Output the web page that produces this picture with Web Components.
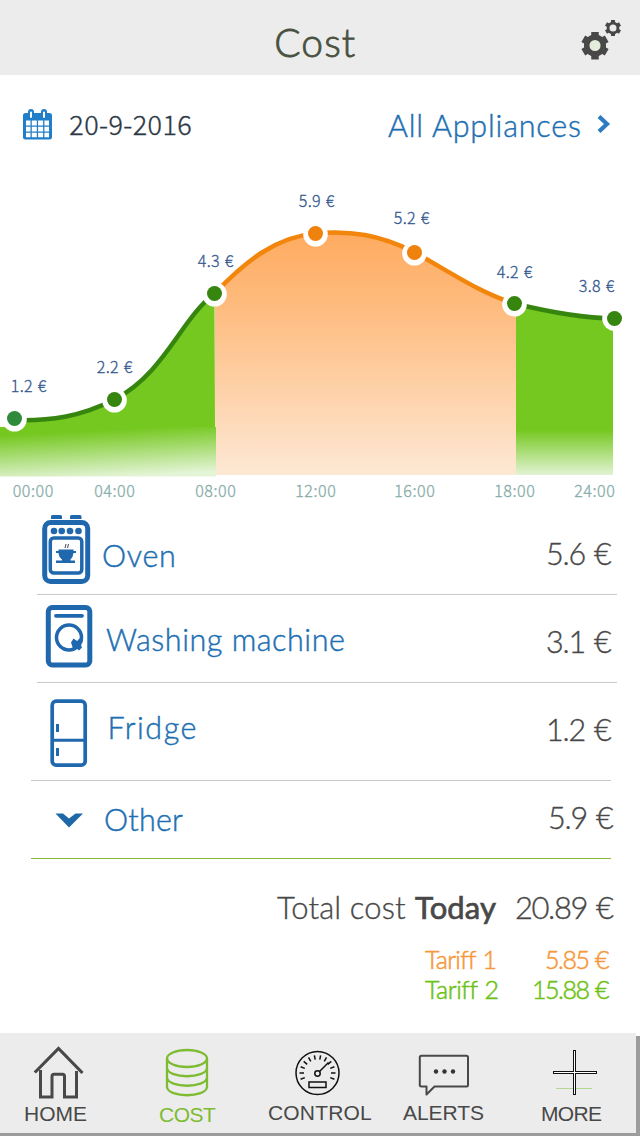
<!DOCTYPE html>
<html lang="en">
<head>
<meta charset="utf-8">
<title>Cost</title>
<style>
  html, body { margin: 0; padding: 0; background: #fff; }
  body { width: 640px; height: 1136px; overflow: hidden; font-family: Lato, "Liberation Sans", sans-serif; }
</style>
</head>
<body>
<cost-screen></cost-screen>
<script>
const ctx = document.createElement('canvas').getContext('2d');

class BaseEl extends HTMLElement {
  connectedCallback() {
    if (!this.shadowRoot) {
      this.attachShadow({ mode: 'open' }).innerHTML = this.view();
    }
  }
}

/* One line of text whose letters are tracked to fill the width "w"; "gap" widens the word space. */
class FitText extends HTMLElement {
  connectedCallback() {
    if (this.shadowRoot) return;
    const w = +this.getAttribute('w');
    const gap = +(this.getAttribute('gap') || 0);
    this.attachShadow({ mode: 'open' }).innerHTML =
      `<style>:host{display:block;width:${w}px;white-space:nowrap;line-height:1.2}
      span{display:block;word-spacing:${gap}px}</style><span><slot></slot></span>`;
    const cs = getComputedStyle(this);
    const text = this.textContent;
    ctx.font = `${cs.fontWeight} ${cs.fontSize} ${cs.fontFamily}`;
    const m = ctx.measureText(text);
    const ink = m.actualBoundingBoxLeft + m.actualBoundingBoxRight + gap * (text.split(' ').length - 1);
    const span = this.shadowRoot.querySelector('span');
    span.style.letterSpacing = ((w - ink) / (text.length - 1)).toFixed(3) + 'px';
    span.style.marginLeft = m.actualBoundingBoxLeft.toFixed(2) + 'px';
  }
}
customElements.define('fit-text', FitText);

class TopBar extends BaseEl {
  view() { return `
    <style>
      :host{display:grid;grid-template-columns:276.300px 1fr 60px;height:75px;box-sizing:border-box;
        background:#ececec;align-items:center}
      fit-text{font-size:39px;font-weight:300;-webkit-text-stroke:.8px;color:#485040;margin-top:9px}
      svg{display:block}
    </style>
    <i></i><fit-text w="78.500">${this.getAttribute('label')}</fit-text>
    <svg width="60" height="75" viewBox="580 0 60 75" stroke="#484848" fill="none">
      <g stroke-width="7.5"><path d="M595 32v27.500M583.3 38.7l23.4 13.6M583.3 52.3l23.4-13.6"/></g>
      <circle cx="595" cy="45.5" r="8.3" stroke-width="5.5" fill="#e4ecdb"/>
      <g stroke-width="4"><path d="M613 20v16M606 24l14 8M606 32l14-8"/></g>
      <circle cx="613" cy="28" r="4.9" stroke-width="2.8" fill="#ececec"/>
    </svg>`; }
}
customElements.define('top-bar', TopBar);

class FilterBar extends BaseEl {
  view() { return `
    <style>
      :host{display:grid;grid-template-columns:23px 47.300px 317.700px 208px 1fr;height:98px;align-items:center}
      svg{display:block}
      .date{font:300 27px "Noto Sans CJK SC","Noto Sans",sans-serif;line-height:40px;color:#2c3846;-webkit-text-stroke:.35px}
      .all{font-size:30.5px;font-weight:300;-webkit-text-stroke:.45px;color:#1d6fb3;margin-top:3px}
    </style>
    <i></i>
    <svg width="30" height="32" viewBox="0 -1 30 32">
      <path fill="#217ec9" d="M2.5 4H5V3a2.6 2.6 0 0 1 6 0v1h7V3a2.6 2.6 0 0 1 6 0v1h2.500a2.500 2.500 0 0 1 2.500 2.500V28a2.500 2.500 0 0 1-2.500 2.500h-24A2.500 2.500 0 0 1 0 28V6.500A2.500 2.500 0 0 1 2.500 4z"/>
      <path stroke="#fff" stroke-width="2" stroke-linecap="round" d="M8 3.500V8M21 3.500V8"/>
      <path fill="#fff" d="M3 11.500h4.500v5H3zM8.800 11.500h5v5h-5zM15.100 11.500h5v5h-5zM21.400 11.500H26v5h-4.600zM3 17.700h4.500v4.800H3zM8.800 17.700h5v4.800h-5zM15.100 17.700h5v4.800h-5zM21.400 17.700H26v4.800h-4.600zM3 23.700h4.500v4.500H3zM8.800 23.700h5v4.500h-5zM15.100 23.700h5v4.500h-5zM21.400 23.700H26v4.500h-4.600z"/>
    </svg>
    <fit-text class="date" w="121">20-9-2016</fit-text>
    <fit-text class="all" w="193">All Appliances</fit-text>
    <svg width="16" height="18" viewBox="0 0 16 18"><path d="M3 1.500l8 7.500-8 7.500" fill="none" stroke="#2b7cc2" stroke-width="4.200"/></svg>`; }
}
customElements.define('filter-bar', FilterBar);

class CostChart extends BaseEl {
  view() {
    const pts = [[14.5,418.5,'#2f8a3c'],[114.5,399.5,'#35850f'],[214.5,293.5,'#35850f'],[315.5,233.5,'#ee820c'],
      [414.5,252.5,'#ee820c'],[514.5,303.5,'#35850f'],[614.5,318.5,'#35850f']];
    const vals = [[28.5,392,'1.2 €'],[114.5,373,'2.2 €'],[215.500,267,'4.3 €'],[316.5,207,'5.9 €'],[411.5,224,'5.2 €'],[514.5,278,'4.2 €'],[596.5,292,'3.8 €']];
    const hrs = [[33,'00:00'],[114.5,'04:00'],[215.5,'08:00'],[315.5,'12:00'],[414.5,'16:00'],[514.5,'18:00'],[594.5,'24:00']];
    const c1 = 'C50 421 80 417 114.500 399.500C165 373 180 320 214.500 293.500';
    const c2 = 'C245 262 275 237 315 233.500C350 230 380 235 414 252C450 272 480 293 514.500 303.500';
    const c3 = 'C545 311 580 318 614 318.500';
    return `
    <style>
      :host{display:block;height:332px}
      svg{display:block}
      text{font-family:"Noto Sans CJK SC","Noto Sans",sans-serif;font-weight:300;text-anchor:middle;stroke-width:.3px}
      .v{font-size:16px;fill:#34588f;stroke:#34588f;word-spacing:1px}
      .h{font-size:16px;fill:#86aca8;stroke:#86aca8}
    </style>
    <svg width="640" height="332" viewBox="0 173 640 332">
      <defs>
        <linearGradient id="o" x1="0" y1="233" x2="0" y2="475" gradientUnits="userSpaceOnUse"><stop offset="0" stop-color="#ffab60"/><stop offset=".3" stop-color="#febb7e"/><stop offset="1" stop-color="#fde8d4"/></linearGradient>
        <linearGradient id="l" x1="108" y1="430" x2="110.500" y2="477" gradientUnits="userSpaceOnUse"><stop offset="0" stop-color="#75c820"/><stop offset="1" stop-color="#e4f4d6"/></linearGradient>
        <linearGradient id="r" x1="0" y1="430" x2="0" y2="475" gradientUnits="userSpaceOnUse"><stop offset="0" stop-color="#75c820"/><stop offset="1" stop-color="#e2f3d3"/></linearGradient>
      </defs>
      <path fill="#75c820" d="M14 420${c1}L215 428H14z"/>
      <path fill="url(#l)" d="M0 427H216V476.500H0z"/>
      <path fill="url(#o)" d="M215 293.500${c2}L516 304V475H216V427H215z"/>
      <path fill="url(#r)" d="M516 304${c3.replace('614 318.500', '613 318.500')}V475H516z"/>
      <g fill="none" stroke-width="4.500">
        <path stroke="#35850f" d="M14 420${c1}"/>
        <path stroke="#f2850b" d="M214.500 293.500${c2}"/>
        <path stroke="#35850f" d="M514.500 303.500${c3}"/>
      </g>
      ${pts.map(([x,y,c], i) => `<circle cx="${x}" cy="${y + (i === 6 ? 0 : .8)}" r="12.300" fill="#fff"/><circle cx="${x}" cy="${y}" r="7.500" fill="${c}"/>`).join('')}
      ${vals.map(([x,y,t]) => `<text class="v" x="${x}" y="${y}" textLength="35.500">${t}</text>`).join('')}
      ${hrs.map(([x,t]) => `<text class="h" x="${x}" y="497" textLength="40.500">${t}</text>`).join('')}
    </svg>`;
  }
}
customElements.define('cost-chart', CostChart);

/* Appliance row: slots for the icon, the name and the price; offsets come from attributes. */
class ApplianceRow extends BaseEl {
  view() {
    const a = n => this.getAttribute(n);
    return `
    <style>
      :host{display:grid;grid-template-columns:${a('label-x')}px ${a('price-x') - a('label-x')}px 1fr;grid-template-rows:100%;
        height:${a('h')}px;box-sizing:border-box;align-items:start;
        background:linear-gradient(${a('rule')},${a('rule')}) ${a('rule-x')}px 100%/580px 1.500px no-repeat}
      ::slotted(svg){display:block}
      ::slotted([slot=name]){font-size:30.500px;color:#1d6fb3;font-weight:300;-webkit-text-stroke:.45px;margin-top:${a('label-y')}px}
      ::slotted([slot=price]){font-size:30.500px;color:#484848;font-weight:300;-webkit-text-stroke:.35px;margin-top:${a('price-y')}px}
    </style>
    <slot name="icon"></slot><slot name="name"></slot><slot name="price"></slot>`;
  }
}
customElements.define('appliance-row', ApplianceRow);

class CostTotals extends BaseEl {
  view() { return `
    <style>
      :host{display:block;height:174px;box-sizing:border-box;padding-top:29.500px}
      div{display:grid}
      .t{grid-template-columns:277px 138px 101px 1fr;font-size:31px;color:#484848;height:55.500px;font-weight:300;-webkit-text-stroke:.35px}
      .t .b{font-weight:400;-webkit-text-stroke:.7px}
      .a{grid-template-columns:425px 121px 1fr;color:#f6983b;font-size:25px;height:30.400px;font-weight:300;-webkit-text-stroke:.55px}
      .b2{grid-template-columns:425px 109px 1fr;color:#6dc215}
    </style>
    <div class="t"><i></i><fit-text w="129">Total cost</fit-text><fit-text class="b" w="81">Today</fit-text><fit-text w="98" gap="2">20.89 €</fit-text></div>
    <div class="a"><i></i><fit-text w="70" gap="1">Tariff 1</fit-text><fit-text w="64" gap="1">5.85 €</fit-text></div>
    <div class="a b2"><i></i><fit-text w="72" gap="1">Tariff 2</fit-text><fit-text w="76" gap="1">15.88 €</fit-text></div>`; }
}
customElements.define('cost-totals', CostTotals);

class NavItem extends BaseEl {
  view() { return `
    <style>
      :host{display:grid;grid-template-rows:70px 1fr;justify-items:center;color:#484848;
        font-family:"Liberation Sans",Arial,sans-serif;font-size:21px}
      :host([active]){color:#7dbb31}
      fit-text{margin-top:${this.getAttribute('dy')}px;line-height:24px}
      ::slotted(svg){display:block}
    </style>
    <slot></slot><fit-text w="${this.getAttribute('w')}">${this.getAttribute('label')}</fit-text>`; }
}
customElements.define('nav-item', NavItem);

class TabBar extends BaseEl {
  view() {
    let ticks = '';
    for (let d = -200; d <= 20; d += 20) {
      const r = d * Math.PI / 180, c = Math.cos(r), s = Math.sin(r);
      ticks += `M${(317.5 + 13.5*c).toFixed(1)} ${(1073 + 13.5*s).toFixed(1)}L${(317.5 + 18*c).toFixed(1)} ${(1073 + 18*s).toFixed(1)}`;
    }
    return `
    <style>
      :host{display:grid;grid-template-columns:112px 152px 112px 135px 122px;height:103px;box-sizing:border-box;
        background:linear-gradient(#ececec,#ececec) 0 0/636px 100px no-repeat,linear-gradient(#9c9c9c,#9c9c9c) 0 3px/640px 100px no-repeat}
      svg{fill:none;stroke:currentColor}
    </style>
    <nav-item label="HOME" w="62" dy="-1.500">
      <svg width="60" height="70" viewBox="26 1033 60 70" stroke-width="3"><path d="M34.800 1072.500L58.500 1048.500L82.500 1073" stroke-width="3.200"/><path d="M40.500 1070V1097H52V1076.500Q52 1074.300 54 1074.300H62.500Q64.500 1074.300 64.500 1076.500V1097H76.500V1071"/></svg>
    </nav-item>
    <nav-item active label="COST" w="56" dy="-.5">
      <svg width="60" height="70" viewBox="158 1033 60 70" stroke-width="2.300"><ellipse cx="187" cy="1058.500" rx="20" ry="8.500"/><path d="M167 1058.500V1087C168 1098 206 1098 207 1087V1058.500M167 1068C168 1079 206 1079 207 1068M167 1077.500C168 1088.500 206 1088.500 207 1077.500"/></svg>
    </nav-item>
    <nav-item label="CONTROL" w="102" dy="-2">
      <svg width="60" height="70" viewBox="290 1033 60 70" stroke-width="1.500" style="color:#111"><circle cx="317.500" cy="1073" r="21.500"/><path d="${ticks}"/><circle cx="317.500" cy="1073.500" r="2.700"/><path d="M319.500 1071.500L328.500 1062.500M309 1082H326V1087.500H309z"/></svg>
    </nav-item>
    <nav-item label="ALERTS" w="81" dy="-2">
      <svg width="60" height="70" viewBox="414.500 1033 60 70" stroke-width="2"><path stroke-linejoin="round" d="M422 1055.800H467Q468.500 1055.800 468.500 1057.300V1085Q468.500 1086.500 467 1086.500H435L427 1094.500V1086.500H422Q420.300 1086.500 420.300 1085V1057.300Q420.300 1055.800 422 1055.800z"/><g fill="#333" stroke="none"><circle cx="436.500" cy="1071.500" r="2.200"/><circle cx="445" cy="1071.500" r="2.200"/><circle cx="453.500" cy="1071.500" r="2.200"/></g></svg>
    </nav-item>
    <nav-item label="MORE" w="60" dy="-1">
      <svg width="60" height="70" viewBox="542 1033 60 70"><path stroke="#b5d796" stroke-width="1" d="M556 1088.500H592"/><path stroke="#111" stroke-width="3" d="M553 1072.500H597M574.500 1050V1095"/><path stroke="#fff" stroke-width="1" d="M554 1072.500H596M574.500 1051V1094"/></svg>
    </nav-item>`;
  }
}
customElements.define('tab-bar', TabBar);

class CostScreen extends BaseEl {
  view() { return `
    <style>
      :host{display:flex;flex-direction:column;width:640px;height:1136px;background:#fff}
      svg{fill:none;stroke:#1f68ad}
    </style>
    <top-bar label="Cost"></top-bar>
    <filter-bar></filter-bar>
    <cost-chart></cost-chart>
    <appliance-row h="90" label-x="103" label-y="32" price-x="548" price-y="29.500" rule="#c9c9c9" rule-x="37">
      <svg slot="icon" width="100" height="89" viewBox="0 505 100 89">
        <path stroke="none" fill="#1f68ad" d="M51 516.500q0-1.500 1.500-1.500h8q1.500 0 1.500 1.500v2.500H51zM70 516.500q0-1.500 1.500-1.500h8.500q1.500 0 1.500 1.500v2.500H70z"/>
        <rect x="44.700" y="522.500" width="43" height="59" rx="6" stroke-width="5"/>
        <g fill="#1f68ad" stroke="none"><circle cx="54" cy="531" r="3.300"/><circle cx="61.700" cy="531" r="3.300"/><circle cx="70" cy="531" r="3.300"/><circle cx="78.500" cy="531" r="3.300"/>
        <path d="M56 551H58.500V549.500H73.500V551H76V553H73.500Q73 557.500 70.500 559.500V560.500H75V563H56V560.500H62V559.500Q59 557.500 58.500 553H56z"/></g>
        <rect x="50.300" y="538" width="31.500" height="35" rx="3.500" stroke-width="3.500"/>
        <path stroke="#445" stroke-width="1" d="M65 548l1-4M67.500 548l1-4"/>
      </svg>
      <fit-text slot="name" w="71">Oven</fit-text><fit-text slot="price" w="64" gap="2">5.6 €</fit-text>
    </appliance-row>
    <appliance-row h="88" label-x="106" label-y="26" price-x="547" price-y="27.500" rule="#c9c9c9" rule-x="37">
      <svg slot="icon" width="100" height="87" viewBox="0 595 100 87">
        <rect x="48.300" y="607.500" width="41.500" height="57.500" rx="4" stroke-width="5"/>
        <path stroke-width="3.800" stroke-linecap="round" d="M56 615.800H82"/>
        <circle cx="69" cy="637.500" r="12.500" stroke-width="3.500"/>
        <path stroke="none" fill="#1f68ad" d="M71 642.500L73.500 638.500L77 641L80 638L83 641L80.500 644L82 647.500L79 650.500L76 648L73 648.500z"/>
      </svg>
      <fit-text slot="name" w="238">Washing machine</fit-text><fit-text slot="price" w="65" gap="2">3.1 €</fit-text>
    </appliance-row>
    <appliance-row h="98" label-x="110.500" label-y="26" price-x="549" price-y="27.500" rule="#c9c9c9" rule-x="31">
      <svg slot="icon" width="100" height="97" viewBox="0 683 100 97">
        <rect x="52.200" y="701.200" width="33" height="64" rx="4" stroke-width="3.700"/>
        <path stroke-width="3" d="M52 740.300H85M57.500 724V732M57.500 748V756"/>
      </svg>
      <fit-text slot="name" w="85">Fridge</fit-text><fit-text slot="price" w="63" gap="2">1.2 €</fit-text>
    </appliance-row>
    <appliance-row h="78" label-x="105" label-y="20" price-x="550" price-y="17.500" rule="#85b93c" rule-x="31">
      <svg slot="icon" width="100" height="77" viewBox="0 781 100 77"><path stroke="none" fill="#1f68a8" d="M55.500 813.500H63L69 818.500L75.500 813.500H83L69 827.500z"/></svg>
      <fit-text slot="name" w="78">Other</fit-text><fit-text slot="price" w="64" gap="2">5.9 €</fit-text>
    </appliance-row>
    <cost-totals></cost-totals>
    <tab-bar></tab-bar>`; }
}
customElements.define('cost-screen', CostScreen);
</script>
</body>
</html>
